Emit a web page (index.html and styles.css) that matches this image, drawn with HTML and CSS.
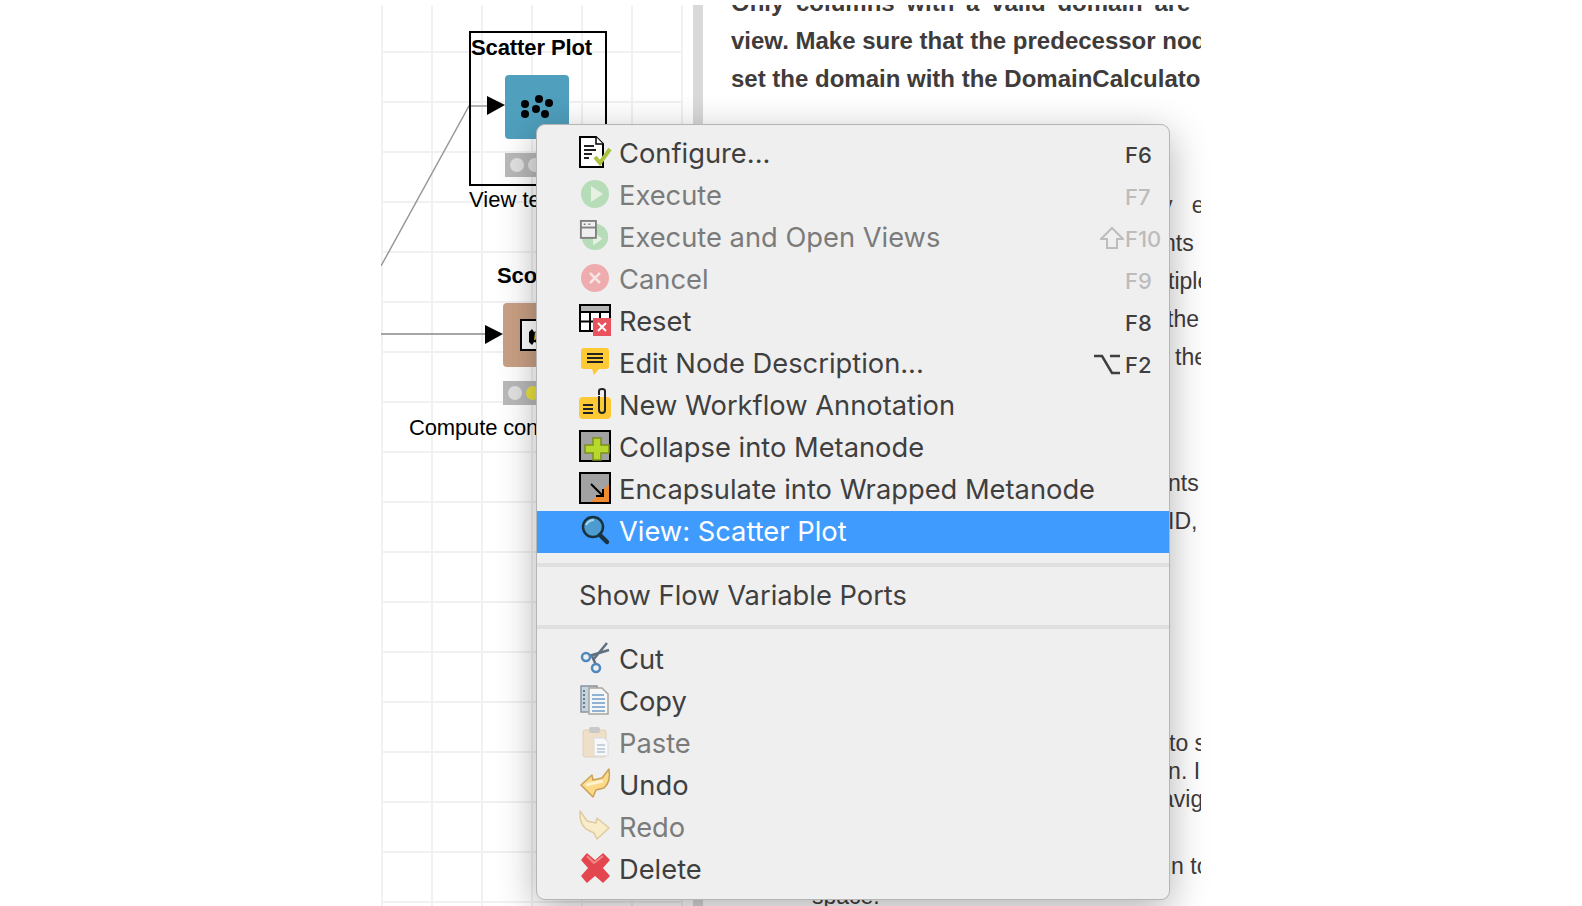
FILE: index.html
```html
<!DOCTYPE html>
<html lang="en">
<head>
<meta charset="utf-8">
<title>Scatter Plot context menu</title>
<link rel="stylesheet" href="styles.css">
</head>
<body>
<div class="page">
  <section class="canvas">
    <svg class="wires" width="302" height="400" viewBox="0 0 302 400">
      <polyline points="0,261 88,101 106,101" fill="none" stroke="#999" stroke-width="1.5"/>
      <line x1="0" y1="329" x2="104" y2="329" stroke="#888" stroke-width="1.5"/>
      <polygon points="106,91 124,100 106,110" fill="#000"/>
      <polygon points="104,320 122,329 104,339" fill="#000"/>
    </svg>
    <div class="selection"></div>
    <div class="node-title scatter-title">Scatter Plot</div>
    <div class="node scatter-node">
      <svg width="64" height="64" viewBox="0 0 64 64"><g fill="#000"><circle cx="20" cy="29" r="4"/><circle cx="34" cy="24" r="4"/><circle cx="44" cy="28" r="4"/><circle cx="31" cy="34" r="4"/><circle cx="20" cy="39" r="4"/><circle cx="40" cy="39" r="4"/></g></svg>
    </div>
    <div class="status scatter-status"><span class="led"></span><span class="led"></span></div>
    <div class="node-label scatter-label">View test data</div>
    <div class="node-title scorer-title">Scorer</div>
    <div class="node scorer-node">
      <svg width="64" height="64" viewBox="0 0 64 64"><path d="M18 17H40V47H18Z" fill="#fff" stroke="#000" stroke-width="2"/><path d="M26 29l3-3 2 3 4-1-1 4 3 2-3 2 1 4-4-1-2 3-3-3z" fill="#000"/><path d="M32 29l4 2-1 5-4 1z" fill="#e3c53a"/></svg>
    </div>
    <div class="status scorer-status"><span class="led"></span><span class="led led-on"></span></div>
    <div class="node-label scorer-label">Compute confusion matrix</div>
  </section>
  <div class="divider"></div>
  <section class="doc">
    <p class="lead"><span class="lead-just">Only columns with a valid domain are available in this</span><br>view. Make sure that the predecessor node has<br>set the domain with the DomainCalculator node.</p>
    <div class="para para-a">
      <div class="peek peek-y">y&nbsp;&nbsp;&nbsp;e</div>
      <div class="peek peek-n">nts</div>
      <div class="peek peek-t">tiple</div>
      <div class="peek peek-th">the</div>
      <div class="peek peek-s">the</div>
    </div>
    <div class="para para-b">
      <div class="peek peek-wide">nts</div>
      <div class="peek peek-wide">ID,</div>
    </div>
    <div class="para para-c">
      <div class="peek peek-to">to s</div>
      <div class="peek peek-n2">in. I</div>
      <div class="peek peek-n3">avig</div>
    </div>
    <div class="para para-d">
      <div class="peek peek-n4">in to</div>
    </div>
    <div class="space-word">space.</div>
  </section>
</div>

<nav class="menu">
  <div class="row up">
    <svg class="ico" viewBox="0 0 32 32"><path d="M1 1H17L24 8V31H1Z" fill="#fff" stroke="#000" stroke-width="2"/><path d="M17 1V8H24" fill="#fff" stroke="#000" stroke-width="1.5"/><path d="M5 10H15M5 14H17M5 18H13M5 22H10" stroke="#222" stroke-width="2"/><path d="M16 21L21 27L31 13" fill="none" stroke="#a9c23f" stroke-width="4"/></svg>
    <span class="label">Configure...</span><span class="key">F6</span>
  </div>
  <div class="row up off">
    <svg class="ico" viewBox="0 0 32 32"><circle cx="16" cy="16" r="14" fill="#b6dcb8"/><path d="M12 8L24 16L12 24Z" fill="#e6f1e2"/></svg>
    <span class="label">Execute</span><span class="key">F7</span>
  </div>
  <div class="row up off">
    <svg class="ico" viewBox="0 0 32 34"><circle cx="16" cy="18" r="14" fill="#b6dcb8"/><path d="M14 13L24 20L14 27Z" fill="#e6f1e2"/><rect x="1" y="1" width="16" height="18" fill="#efefef" stroke="#808080" stroke-width="2"/><path d="M1 8H17" stroke="#808080" stroke-width="2"/><path d="M4 4.500H6M9 4.500H11" stroke="#808080" stroke-width="1.500"/></svg>
    <span class="label">Execute and Open Views</span>
    <svg class="mod" width="24" height="24" viewBox="0 0 24 24"><path d="M12 2L23 13H17V22H7V13H1Z" fill="none" stroke="#bdbdbd" stroke-width="2"/></svg>
    <span class="key">F10</span>
  </div>
  <div class="row up off">
    <svg class="ico" viewBox="0 0 32 32"><circle cx="16" cy="16" r="14" fill="#eeacae"/><path d="M11 11L21 21M21 11L11 21" stroke="#f8e4e2" stroke-width="2.500"/></svg>
    <span class="label">Cancel</span><span class="key">F9</span>
  </div>
  <div class="row up">
    <svg class="ico" viewBox="0 0 32 32"><rect x="1" y="1" width="30" height="26" fill="#fff" stroke="#000" stroke-width="2"/><rect x="2" y="2" width="28" height="5" fill="#b4b4b4"/><path d="M1 8H31M1 17.500H31M11 8V27M21 8V27" stroke="#000" stroke-width="2"/><rect x="14" y="14" width="18" height="18" fill="#e8535e"/><path d="M19 19L27 27M27 19L19 27" stroke="#fff" stroke-width="2"/></svg>
    <span class="label">Reset</span><span class="key">F8</span>
  </div>
  <div class="row up">
    <svg class="ico" viewBox="0 0 32 32"><path d="M5 2H27Q30 2 30 5V20Q30 23 27 23H20L15 29L13 23H5Q2 23 2 20V5Q2 2 5 2Z" fill="#fdc935"/><path d="M8 8H24M8 12H24M8 16H24" stroke="#222" stroke-width="2"/></svg>
    <span class="label">Edit Node Description...</span>
    <svg class="mod mod-opt" width="26" height="22" viewBox="0 0 26 22"><path d="M0 3H8L18 20H26M16 3H26" fill="none" stroke="#3f3f3f" stroke-width="2.500"/></svg>
    <span class="key">F2</span>
  </div>
  <div class="row up">
    <svg class="ico" viewBox="0 0 32 32"><rect x="0" y="9" width="32" height="22" rx="4" fill="#fdc935"/><path d="M4 17H14M4 21H14M4 25H14" stroke="#222" stroke-width="2"/><path d="M20 7V3Q20 1 23 1Q26 1 26 3V22Q26 25 23 25Q20 25 20 22V8" fill="none" stroke="#222" stroke-width="2"/></svg>
    <span class="label">New Workflow Annotation</span>
  </div>
  <div class="row up">
    <svg class="ico" viewBox="0 0 32 32"><rect x="1" y="1" width="30" height="30" fill="#a2a2a2" stroke="#000" stroke-width="2"/><path d="M14 8H22V15H30V23H22V30H14V23H6V15H14Z" fill="#b6d92c" stroke="#7d8f1f" stroke-width="1.500"/></svg>
    <span class="label">Collapse into Metanode</span>
  </div>
  <div class="row up">
    <svg class="ico" viewBox="0 0 32 32"><rect x="1" y="1" width="30" height="30" fill="#a2a2a2" stroke="#000" stroke-width="2"/><path d="M30 12V30H12Z" fill="#f08a2e"/><path d="M12 12L24 24M24 17V24H17" fill="none" stroke="#000" stroke-width="2"/></svg>
    <span class="label">Encapsulate into Wrapped Metanode</span>
  </div>
  <div class="row up active">
    <svg class="ico" viewBox="0 0 32 32"><circle cx="14" cy="13" r="10" fill="#4d9cd0" stroke="#17333f" stroke-width="2.500"/><path d="M7 11Q10 6 15 6" fill="none" stroke="#a9d5ee" stroke-width="2"/><path d="M21 21L28 28" stroke="#17333f" stroke-width="4.500" stroke-linecap="round"/></svg>
    <span class="label">View: Scatter Plot</span>
  </div>
  <div class="sep"></div>
  <div class="row"><span class="label">Show Flow Variable Ports</span></div>
  <div class="sep sep-low"></div>
  <div class="row">
    <svg class="ico" viewBox="0 0 32 32"><path d="M28 2L14 19M30 9L10 15" stroke="#5f6f80" stroke-width="2.500"/><path d="M13 15L17 24" stroke="#5f6f80" stroke-width="2.500"/><circle cx="7" cy="16" r="4" fill="none" stroke="#4f88bd" stroke-width="2.500"/><circle cx="17" cy="27" r="4" fill="none" stroke="#4f88bd" stroke-width="2.500"/></svg>
    <span class="label">Cut</span>
  </div>
  <div class="row">
    <svg class="ico" viewBox="0 0 32 32"><rect x="2" y="3" width="16" height="26" fill="#c6d3de" stroke="#8a94a0" stroke-width="1.500"/><path d="M5 7V26" stroke="#5f7f9f" stroke-width="2" stroke-dasharray="2 2"/><path d="M10 5H23L29 11V31H10Z" fill="#f4f6f8" stroke="#a9a69a" stroke-width="1.500"/><path d="M13 12H25M13 16H26M13 20H26M13 24H26M13 28H26" stroke="#6f9cc6" stroke-width="1.500"/></svg>
    <span class="label">Copy</span>
  </div>
  <div class="row off">
    <svg class="ico" viewBox="0 0 32 32"><rect x="4" y="5" width="23" height="27" rx="2" fill="#eddfc8" stroke="#e0d1b4"/><rect x="10" y="2" width="11" height="6" rx="2" fill="#c9c9c9"/><path d="M15 13H25L29 17V31H15Z" fill="#f7f8fa" stroke="#d8dae0"/><path d="M18 20H26M18 24H26M18 27H26" stroke="#b6c4d4" stroke-width="1.500"/></svg>
    <span class="label">Paste</span>
  </div>
  <div class="row">
    <svg class="ico" viewBox="0 0 32 32"><path d="M2 18L13 8L14 13L23 11L30 2Q32 15 25 21L17 23L14 30Z" fill="#fbd987" stroke="#c9a057" stroke-width="1.500" stroke-linejoin="round"/><path d="M7 18L15 16L24 14" fill="none" stroke="#fff2cf" stroke-width="3"/></svg>
    <span class="label">Undo</span>
  </div>
  <div class="row off">
    <svg class="ico" viewBox="0 0 32 32"><path d="M30 19L18 9L17 14L8 12L1 2Q0 14 7 20L15 24L18 30Z" fill="#f8ecc9" stroke="#decba0" stroke-width="1.500" stroke-linejoin="round"/></svg>
    <span class="label">Redo</span>
  </div>
  <div class="row">
    <svg class="ico" viewBox="0 0 32 32"><path d="M8 3L16 10L24 3L30 9L23 17L30 25L24 31L16 24L8 31L3 25L10 17L3 9Z" fill="#e4464f" stroke="#e4464f" stroke-width="1.500" stroke-linejoin="round"/><path d="M8 5L15 12L24 5" fill="none" stroke="#f08a8a" stroke-width="2"/></svg>
    <span class="label">Delete</span>
  </div>
</nav>
</body>
</html>
```
FILE: styles.css
```css
* { box-sizing: border-box; }
html, body { height: 100%; }
body {
  margin: 0;
  padding: 5px 0 0 381px;
  background: #fff;
  overflow: hidden;
  font-family: "Liberation Sans", Arial, sans-serif;
}
.page { display: flex; width: 820px; height: 901px; }

/* workflow canvas */
.canvas {
  position: relative;
  flex: 0 0 302px;
  margin-right: 10px;
  background-image:
    linear-gradient(to right, #f1f1f1 2px, transparent 2px),
    linear-gradient(to bottom, #f1f1f1 2px, transparent 2px);
  background-size: 50px 50px;
  background-position: 0 0, 0 46px;
}
.wires { position: absolute; left: 0; top: 0; }
.selection { position: absolute; left: 88px; top: 26px; width: 138px; height: 155px; border: 2px solid #000; }
.node { position: absolute; width: 64px; height: 64px; border-radius: 4px; }
.node svg { display: block; }
.scatter-node { left: 124px; top: 70px; background: #4f9fbd; }
.scorer-node { left: 122px; top: 298px; background: #c9a084; }
.node-title, .node-label { position: absolute; white-space: nowrap; color: #000; font-size: 22px; line-height: 26px; }
.node-title { font-weight: 700; letter-spacing: -.1px; }
.scatter-title { left: 90px; top: 30px; }
.scorer-title { left: 116px; top: 258px; }
.scatter-label { left: 88px; top: 182px; }
.scorer-label { left: 28px; top: 410px; letter-spacing: -.15px; }
.status { position: absolute; display: flex; gap: 4px; align-items: center; width: 64px; height: 24px; padding-left: 5px; background: #b9b9b9; }
.scatter-status { left: 124px; top: 148px; }
.scorer-status { left: 122px; top: 376px; }
.led { width: 14px; height: 14px; border-radius: 50%; background: #e2e2e2; }
.led-on { background: #ebe13f; }

.divider { flex: 0 0 10px; background: #d9d9d9; }

/* description pane */
.doc { flex: 1; min-width: 0; padding-left: 28px; overflow: hidden; color: #403b3b; }
.lead { margin: -21px 0 0; font-size: 24px; line-height: 38px; font-weight: 700; white-space: nowrap; }
.lead-just { word-spacing: 5px; }
.para { font-size: 23px; white-space: nowrap; }
.para-a { margin-top: 88px; line-height: 38px; }
.para-b { margin-top: 88px; line-height: 38px; }
.para-c { margin-top: 189px; line-height: 28px; }
.para-d { margin-top: 39px; line-height: 28px; }
.peek { padding-left: 438px; }
.peek-y { padding-left: 430px; }
.peek-n { padding-left: 432px; }
.peek-t { padding-left: 437px; }
.peek-th { padding-left: 436px; }
.peek-s { padding-left: 444px; }
.peek-wide { padding-left: 437px; }
.peek-to { padding-left: 438px; }
.peek-n2 { padding-left: 432px; }
.peek-n3 { padding-left: 430px; }
.peek-n4 { padding-left: 435px; }
.space-word { margin: 2px 0 0 81px; font-size: 23px; line-height: 28px; }

/* context menu */
.menu {
  position: absolute;
  left: 536px;
  top: 124px;
  width: 634px;
  height: 776px;
  padding: 8px 0 0;
  background: #efefef;
  border: 1px solid #b5b5b5;
  border-radius: 9px;
  box-shadow: 0 10px 38px rgba(0, 0, 0, .3);
  color: #3f3f3f;
  font-family: Inter, "Liberation Sans", sans-serif;
  font-size: 27.300px;
}
.row { display: flex; align-items: center; height: 42px; padding-left: 42px; white-space: nowrap; }
.ico { flex: 0 0 32px; width: 32px; height: 32px; margin: -4px 8px 0 0; overflow: visible; }
.label { flex: 1; }
.up .label { margin-top: -2px; }
.key { flex: 0 0 44px; margin-top: 2px; font-size: 22px; font-weight: 500; }
.mod { flex: none; margin-right: 1px; }
.mod-opt { margin-right: 5px; }
.off { color: #7b7b7b; }
.off .key { color: #bcbcbc; }
.active { background: #409bff; color: #fff; }
.sep { height: 4px; margin: 10px 0 7px; background: #e0e0e0; }
.sep-low { margin: 9px 0; }
```
